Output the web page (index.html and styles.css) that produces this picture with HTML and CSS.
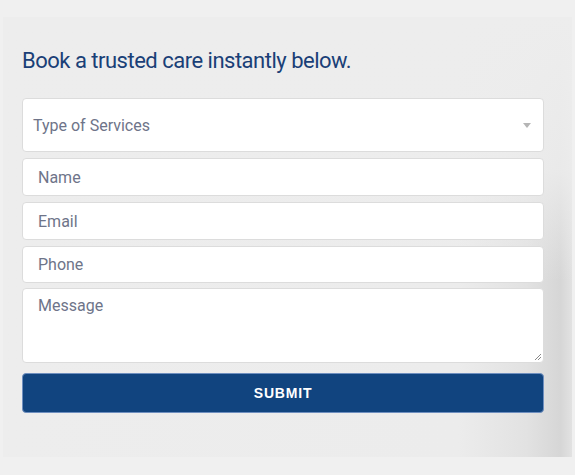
FILE: index.html
```html
<!DOCTYPE html>
<html>
<head>
<meta charset="utf-8">
<link rel="stylesheet" href="styles.css">
</head>
<body>
<div class="panel">
  <h2 class="title">Book a trusted care instantly below.</h2>
  <form class="form">
    <div class="select">
      <span class="ph">Type of Services</span>
      <span class="caret"></span>
    </div>
    <div class="field"><span class="ph">Name</span></div>
    <div class="field"><span class="ph">Email</span></div>
    <div class="field short"><span class="ph">Phone</span></div>
    <div class="field area">
      <span class="ph">Message</span>
      <svg class="grip" width="8" height="8" viewBox="0 0 8 8"><path d="M7 1L1 7M7 4L4 7" stroke="#888" stroke-width="1" fill="none"/></svg>
    </div>
    <button type="button" class="submit">SUBMIT</button>
  </form>
</div>
</body>
</html>
```
FILE: styles.css
```css
html, body {
  margin: 0;
  padding: 0;
  background: #f0f0f0;
  width: 575px;
  height: 475px;
  overflow: hidden;
}
body {
  padding: 17px 3px 0 3px;
  box-sizing: border-box;
  font-family: Roboto, "Liberation Sans", sans-serif;
}
.panel {
  height: 440px;
  box-sizing: border-box;
  padding: 33px 28px 0 19px;
  background:
    linear-gradient(180deg, #ededed 0%, rgba(237,237,237,0.85) 35%, rgba(237,237,237,0) 60%),
    linear-gradient(90deg, #ededed 0%, #ececec 80%, #e2e2e2 92%, #d6d6d6 98%, #e2e2e2 100%);
}
.title {
  margin: 0 0 26px 0;
  font-weight: 400;
  font-size: 22px;
  line-height: 22px;
  letter-spacing: -0.5px;
  color: #1a3f77;
}
.form {
  display: flex;
  flex-direction: column;
  gap: 6px;
}
.select, .field {
  background: #fff;
  border: 1px solid #dcdcdc;
  border-radius: 4px;
  box-sizing: border-box;
  display: flex;
  align-items: center;
  position: relative;
}
.select {
  height: 54px;
  padding: 0 10px;
  justify-content: space-between;
}
.field {
  height: 38px;
  padding: 0 15px;
}
.short {
  height: 37px;
  margin-bottom: -1px;
}
.area {
  height: 75px;
  align-items: flex-start;
  padding-top: 7px;
}
.ph {
  font-size: 16px;
  color: #6e7489;
}
.caret {
  width: 0;
  height: 0;
  border-left: 4px solid transparent;
  border-right: 4px solid transparent;
  border-top: 5px solid #b5b5b5;
  margin-right: 2px;
}
.grip {
  position: absolute;
  right: 1px;
  bottom: 1px;
}
.submit {
  margin-top: 4px;
  height: 40px;
  border: 1px solid #6f8fbf;
  border-radius: 4px;
  background: #11447f;
  color: #fff;
  font-family: "Liberation Sans", Arial, sans-serif;
  font-weight: 700;
  font-size: 14px;
  letter-spacing: 0.8px;
  cursor: pointer;
}
```
